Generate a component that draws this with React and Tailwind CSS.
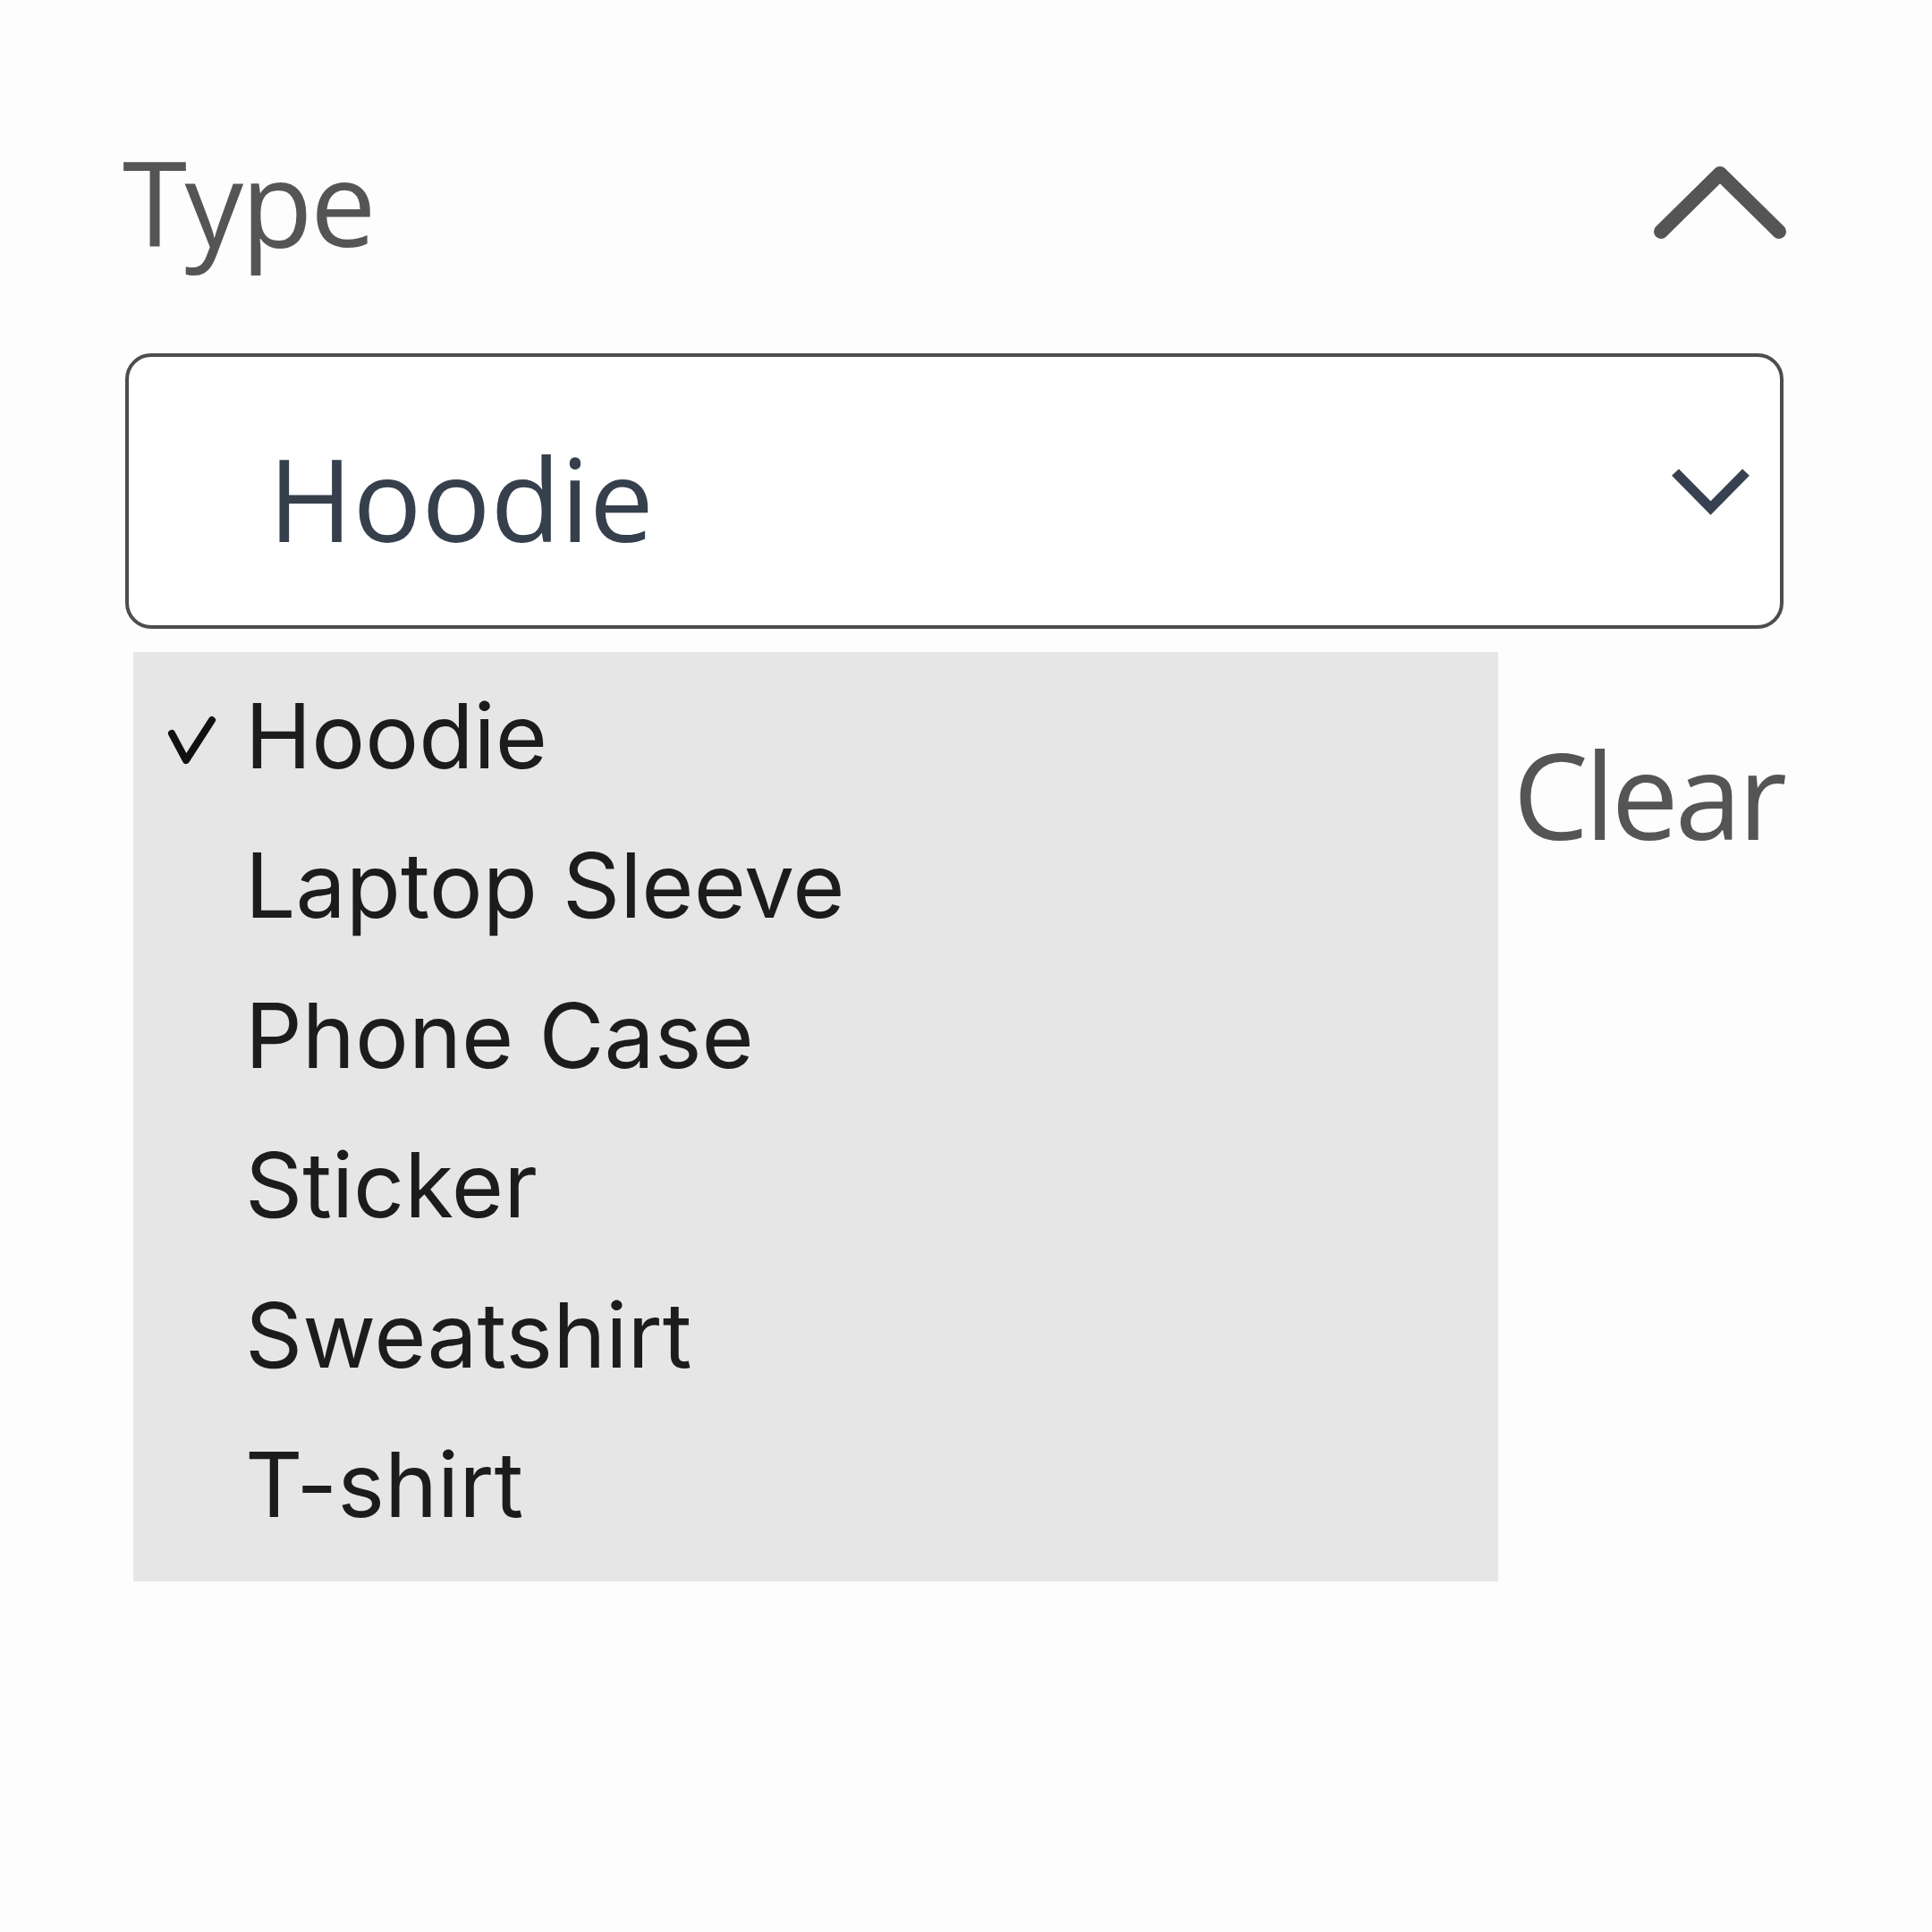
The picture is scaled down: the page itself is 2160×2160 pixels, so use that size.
export default function App() {
  const items = ["Hoodie", "Laptop Sleeve", "Phone Case", "Sticker", "Sweatshirt", "T-shirt"];
  return (
    <div className="relative w-[2160px] h-[2160px] bg-[#fdfdfd] pl-[140px] pr-[166px] pt-[160px] font-['Open_Sans',sans-serif]">
      <div className="flex justify-between items-start h-[131px]">
        <span className="-ml-[3px] text-[131px] leading-[131px] tracking-[-0.02em] text-[#555555]">Type</span>
        <svg className="mt-[16px] -mr-[7px]" width="160" height="100" viewBox="0 0 160 100" fill="none">
          <path d="M16 83 L82 18 L148 83" stroke="#555555" strokeWidth="16" strokeLinecap="round" strokeLinejoin="round" />
        </svg>
      </div>
      <div className="mt-[104px] h-[308px] border-4 border-[#4d4d4d] rounded-[29px] bg-white flex justify-between items-start">
        <span className="pl-[156px] pt-[94px] text-[128px] leading-[128px] text-[#36404c]">Hoodie</span>
        <svg className="mt-[118px] mr-[27px]" width="100" height="64" viewBox="0 0 100 64" fill="none">
          <path d="M10 11 L49.5 51 L89 11" stroke="#374151" strokeWidth="11" strokeLinecap="butt" strokeLinejoin="miter" />
        </svg>
      </div>
      <div className="mt-[117px] flex justify-end">
        <span className="text-[134px] leading-[134px] tracking-[-0.03em] text-[#555555]">Clear</span>
      </div>

      <div className="absolute left-[149px] top-[729px] w-[1526px] h-[1039px] bg-[#e6e6e6] pt-[10px] font-['Inter',sans-serif] text-[#1c1c1c]">
        {items.map((it, i) => (
          <div key={it} className="flex items-start h-[167.4px]">
            <div className="w-[125px] h-full shrink-0">
              {i === 0 && (
                <svg className="ml-[36px] mt-[59px]" width="60" height="60" viewBox="0 0 60 60" fill="none">
                  <path d="M7 22 L23 52 L52 7" stroke="#111111" strokeWidth="8" strokeLinecap="round" strokeLinejoin="round" />
                </svg>
              )}
            </div>
            <span className="text-[100px] leading-[167.4px]">{it}</span>
          </div>
        ))}
      </div>
    </div>
  );
}
